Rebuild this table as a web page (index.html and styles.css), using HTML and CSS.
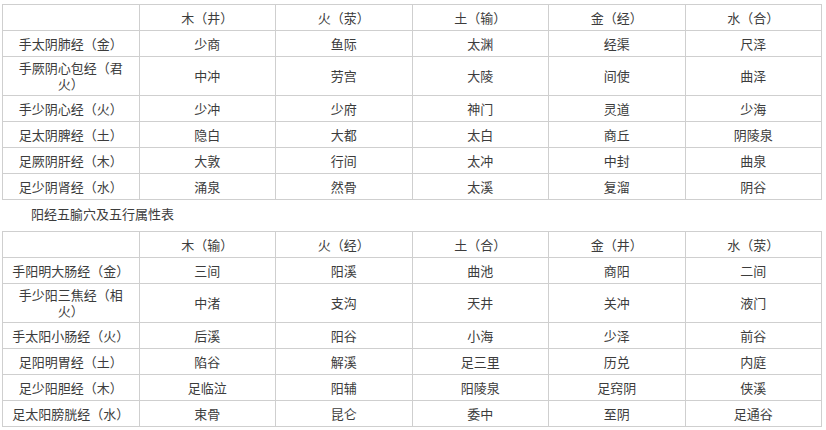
FILE: index.html
```html
<!DOCTYPE html>
<html lang="zh-CN">
<head>
<meta charset="utf-8">
<title>五腧穴及五行属性表</title>
<link rel="stylesheet" href="styles.css">
</head>
<body>
<div class="page">
  <table class="wx">
    <tr><td></td><td>木（井）</td><td>火（荥）</td><td>土（输）</td><td>金（经）</td><td>水（合）</td></tr>
    <tr><td>手太阴肺经（金）</td><td>少商</td><td>鱼际</td><td>太渊</td><td>经渠</td><td>尺泽</td></tr>
    <tr><td>手厥阴心包经（君火）</td><td>中冲</td><td>劳宫</td><td>大陵</td><td>间使</td><td>曲泽</td></tr>
    <tr><td>手少阴心经（火）</td><td>少冲</td><td>少府</td><td>神门</td><td>灵道</td><td>少海</td></tr>
    <tr><td>足太阴脾经（土）</td><td>隐白</td><td>大都</td><td>太白</td><td>商丘</td><td>阴陵泉</td></tr>
    <tr><td>足厥阴肝经（木）</td><td>大敦</td><td>行间</td><td>太冲</td><td>中封</td><td>曲泉</td></tr>
    <tr><td>足少阴肾经（水）</td><td>涌泉</td><td>然骨</td><td>太溪</td><td>复溜</td><td>阴谷</td></tr>
  </table>
  <p class="caption">阳经五腧穴及五行属性表</p>
  <table class="wx">
    <tr><td></td><td>木（输）</td><td>火（经）</td><td>土（合）</td><td>金（井）</td><td>水（荥）</td></tr>
    <tr><td>手阳明大肠经（金）</td><td>三间</td><td>阳溪</td><td>曲池</td><td>商阳</td><td>二间</td></tr>
    <tr><td>手少阳三焦经（相火）</td><td>中渚</td><td>支沟</td><td>天井</td><td>关冲</td><td>液门</td></tr>
    <tr><td>手太阳小肠经（火）</td><td>后溪</td><td>阳谷</td><td>小海</td><td>少泽</td><td>前谷</td></tr>
    <tr><td>足阳明胃经（土）</td><td>陷谷</td><td>解溪</td><td>足三里</td><td>历兑</td><td>内庭</td></tr>
    <tr><td>足少阳胆经（木）</td><td>足临泣</td><td>阳辅</td><td>阳陵泉</td><td>足窍阴</td><td>侠溪</td></tr>
    <tr><td>足太阳膀胱经（水）</td><td>束骨</td><td>昆仑</td><td>委中</td><td>至阴</td><td>足通谷</td></tr>
  </table>
</div>
</body>
</html>
```
FILE: styles.css
```css
html, body {
  margin: 0;
  padding: 0;
  background: #fff;
}
.page {
  padding: 4px 0 0 2px;
  width: 820px;
  font-family: "Noto Sans CJK SC", "Microsoft YaHei", sans-serif;
  font-size: 13px;
  color: #3c3c3c;
  text-spacing-trim: space-all;
  font-kerning: none;
  font-feature-settings: "palt" 0, "halt" 0, "chws" 0;
}
.wx {
  width: 820px;
  table-layout: fixed;
  border-collapse: collapse;
}
.wx td {
  border: 1px solid #cfcfcf;
  padding: 3px 5px;
  height: 19px;
  line-height: 16px;
  text-align: center;
  vertical-align: middle;
}
.caption {
  margin: 0;
  padding: 6px 0 9px 29px;
  line-height: 16px;
}
```
